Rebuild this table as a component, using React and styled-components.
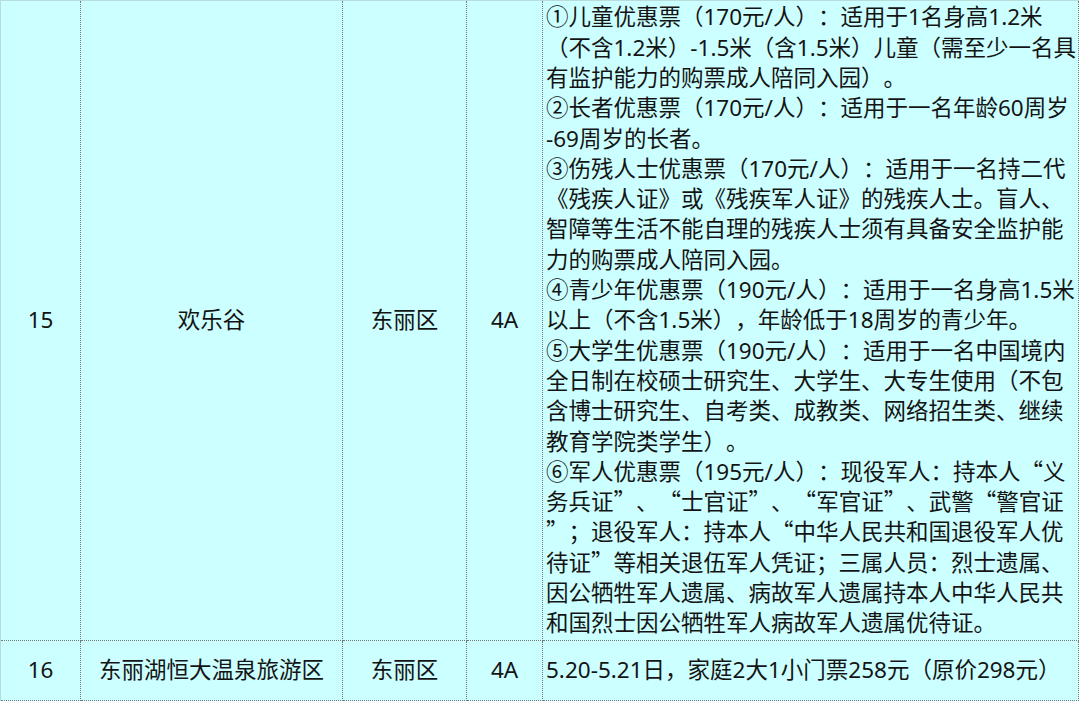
import React from 'react';
import styled, { createGlobalStyle } from 'styled-components';

const GlobalStyle = createGlobalStyle`
	html, body {
		margin: 0;
		padding: 0;
		background: #ffffff;
	}
	body {
		font-family: "Noto Sans", "Noto Sans CJK SC", sans-serif;
	}
`;

const Table = styled.table`
	border-collapse: collapse;
	table-layout: fixed;
	width: 1079px;
	background-color: #ccffff;
	color: #141414;
	font-size: 22.5px;
	text-spacing-trim: space-all;
	border-top: 1px solid #b8dcdc;
	border-left: 1px solid #b8dcdc;
`;

const Col = styled.col`
	width: ${(props) => props.w}px;
`;

const Row = styled.tr`
	height: ${(props) => props.h}px;
`;

const Cell = styled.td`
	border-right: 1px dotted #6f7a7a;
	border-bottom: 1px dotted #6f7a7a;
	padding: ${(props) => (props.wide ? '0 0 0 3px' : '0')};
	text-align: ${(props) => (props.wide ? 'left' : 'center')};
	vertical-align: middle;
	line-height: 30.35px;
	overflow: hidden;
	box-sizing: border-box;
`;

const Line = styled.div`
	white-space: nowrap;
	height: 30.3px;
`;

// curly quotes are full width in the original, take them from the CJK face
const Quote = styled.span`
	font-family: "Noto Sans CJK SC", sans-serif;
	line-height: 1;
`;

const widths = [80, 262, 124, 76, 536];

const rows = [
	{
		no: '15',
		name: '欢乐谷',
		area: '东丽区',
		level: '4A',
		height: 640,
		lines: [
			'①儿童优惠票（170元/人）：适用于1名身高1.2米',
			'（不含1.2米）-1.5米（含1.5米）儿童（需至少一名具',
			'有监护能力的购票成人陪同入园）。',
			'②长者优惠票（170元/人）：适用于一名年龄60周岁',
			'-69周岁的长者。',
			'③伤残人士优惠票（170元/人）：适用于一名持二代',
			'《残疾人证》或《残疾军人证》的残疾人士。盲人、',
			'智障等生活不能自理的残疾人士须有具备安全监护能',
			'力的购票成人陪同入园。',
			'④青少年优惠票（190元/人）：适用于一名身高1.5米',
			'以上（不含1.5米），年龄低于18周岁的青少年。',
			'⑤大学生优惠票（190元/人）：适用于一名中国境内',
			'全日制在校硕士研究生、大学生、大专生使用（不包',
			'含博士研究生、自考类、成教类、网络招生类、继续',
			'教育学院类学生）。',
			'⑥军人优惠票（195元/人）：现役军人：持本人“义',
			'务兵证”、“士官证”、“军官证”、武警“警官证',
			'”；退役军人：持本人“中华人民共和国退役军人优',
			'待证”等相关退伍军人凭证；三属人员：烈士遗属、',
			'因公牺牲军人遗属、病故军人遗属持本人中华人民共',
			'和国烈士因公牺牲军人病故军人遗属优待证。',
		],
	},
	{
		no: '16',
		name: '东丽湖恒大温泉旅游区',
		area: '东丽区',
		level: '4A',
		height: 60,
		lines: ['5.20-5.21日，家庭2大1小门票258元（原价298元）'],
	},
];

const renderText = (text) =>
	text.split(/([“”])/).map((part, i) =>
		part === '“' || part === '”' ? <Quote key={i}>{part}</Quote> : part
	);

const App = () => {
	return (
		<>
			<GlobalStyle />
			<Table>
				<colgroup>
					{widths.map((w, i) => (
						<Col key={i} w={w} />
					))}
				</colgroup>
				<tbody>
					{rows.map((r) => (
						<Row key={r.no} h={r.height}>
							<Cell>{r.no}</Cell>
							<Cell>{r.name}</Cell>
							<Cell>{r.area}</Cell>
							<Cell>{r.level}</Cell>
							<Cell wide>
								{r.lines.map((l, i) => (
									<Line key={i}>{renderText(l)}</Line>
								))}
							</Cell>
						</Row>
					))}
				</tbody>
			</Table>
		</>
	);
};

export default App;
